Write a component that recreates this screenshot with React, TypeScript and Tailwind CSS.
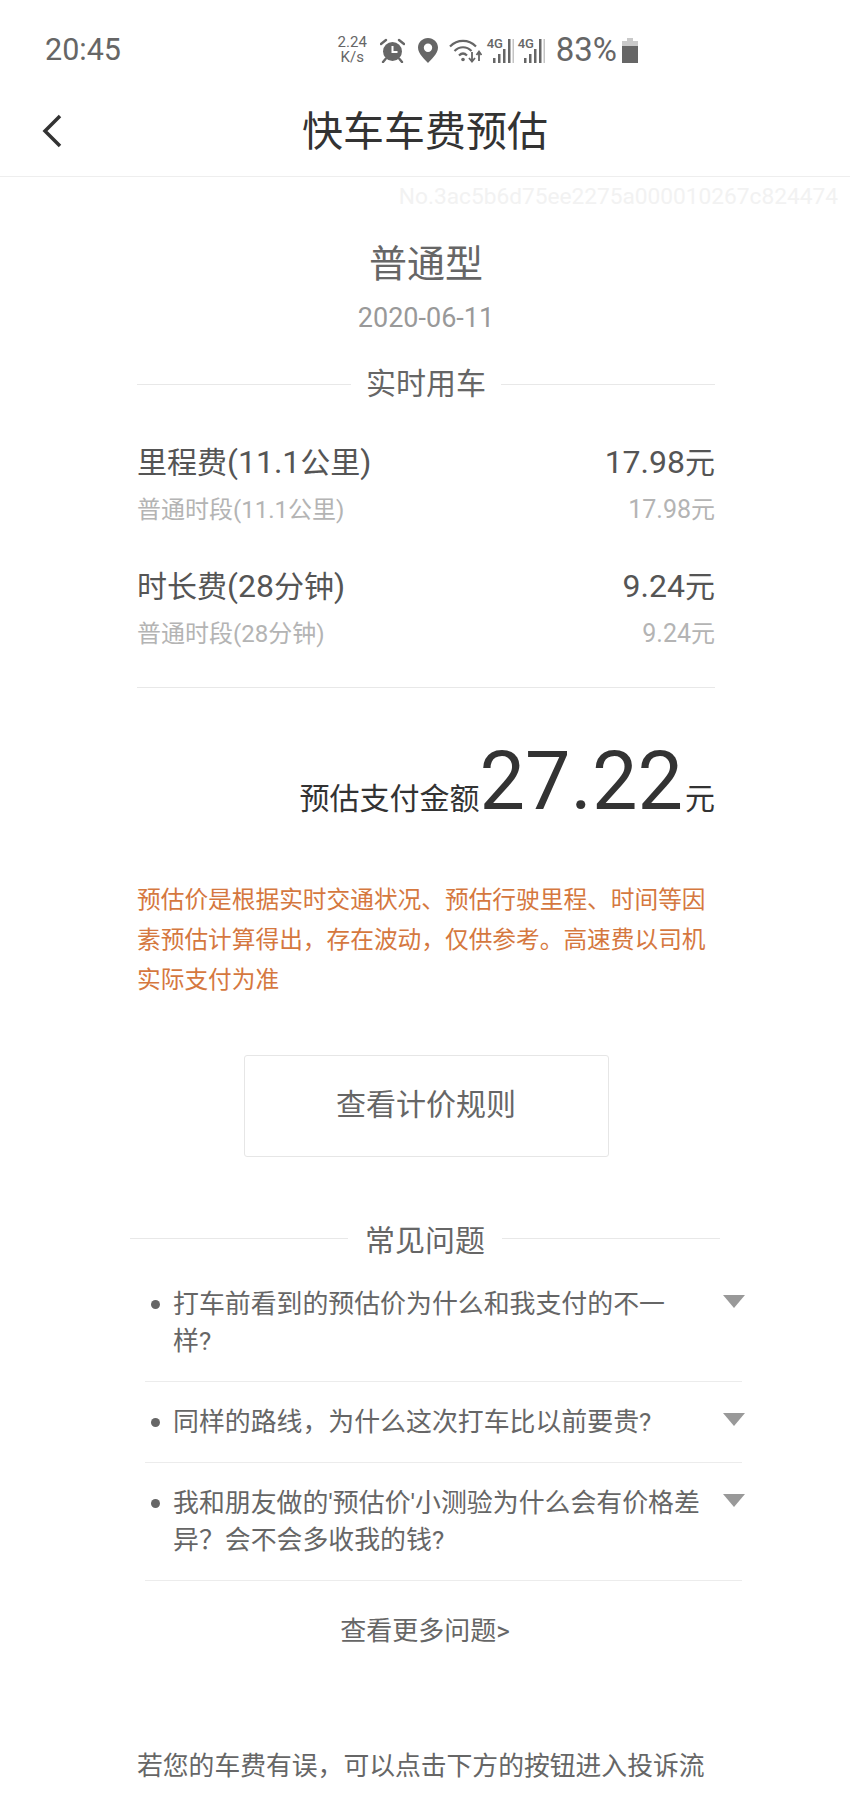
const FONT = "font-['Roboto','Noto_Sans_CJK_SC',sans-serif]";

function Alarm() {
  return (
    <svg width="25" height="25" viewBox="0 0 25 25" fill="none">
      <circle cx="12.5" cy="13.5" r="9.5" fill="#666" />
      <path d="M12.5 8v6h5" stroke="#fff" strokeWidth="2" fill="none" />
      <path d="M1 6l5-4M24 6l-5-4" stroke="#666" strokeWidth="2.4" strokeLinecap="round" />
      <path d="M5.5 21l-2.5 3M19.5 21l2.5 3" stroke="#666" strokeWidth="2.4" strokeLinecap="round" />
    </svg>
  );
}

function Pin() {
  return (
    <svg width="20" height="25" viewBox="0 0 20 25">
      <path
        fillRule="evenodd"
        d="M10 0C4.5 0 0 4.3 0 9.6 0 16 7.5 22 10 25c2.500-3 10-9 10-15.400C20 4.300 15.500 0 10 0zm0 5.500a4.200 4.200 0 110 8.400 4.200 4.200 0 010-8.400z"
        fill="#666"
      />
    </svg>
  );
}

function Wifi() {
  return (
    <svg width="33" height="25" viewBox="0 0 33 25" fill="none">
      <path d="M1 8.500C8.500 1 19.500 1 27 8.500" stroke="#666" strokeWidth="2.200" />
      <path d="M5.500 13c5-5 12-5 17 0" stroke="#666" strokeWidth="2.200" />
      <path d="M10 17.500c2.500-2.500 5.500-2.500 8 0" stroke="#666" strokeWidth="2.200" />
      <circle cx="14" cy="21.500" r="1.800" fill="#666" />
      <path d="M23 14v9M20 20l3 3.500 3-3.500" stroke="#666" strokeWidth="1.800" />
      <path d="M30 23v-9M27.500 17l2.500-3.500 2.500 3.500" stroke="#666" strokeWidth="1.800" />
    </svg>
  );
}

function Signal() {
  return (
    <div className="relative h-[25px] w-[27px]">
      <span className="absolute left-0 top-[-1px] text-[13px] leading-[14px] font-medium text-[#666]">4G</span>
      <svg className="absolute left-0 top-0" width="27" height="25" viewBox="0 0 27 25">
        <rect x="6" y="20" width="2.500" height="5" fill="#666" />
        <rect x="11" y="16" width="2.500" height="9" fill="#666" />
        <rect x="16" y="11" width="2.500" height="14" fill="#666" />
        <rect x="21" y="1" width="2.500" height="24" fill="#666" />
        <rect x="25.500" y="1" width="1.500" height="24" fill="#c4c4c4" />
      </svg>
    </div>
  );
}

function Battery() {
  return (
    <svg width="16" height="25" viewBox="0 0 16 25">
      <rect x="5" y="0" width="6" height="3" fill="#c9c9c9" />
      <rect x="0" y="3" width="16" height="5" fill="#c9c9c9" />
      <rect x="0" y="8" width="16" height="17" fill="#666" />
    </svg>
  );
}

function Caret() {
  return (
    <svg width="22" height="13" viewBox="0 0 22 13">
      <path d="M0 0h22L11 13z" fill="#999" />
    </svg>
  );
}

function Divider({ label, className, labelClass }: { label: string; className: string; labelClass?: string }) {
  return (
    <div className={"flex h-10 items-center " + className}>
      <div className="h-px flex-1 bg-[#e8e8e8]" />
      <span className={"text-[30px] leading-10 text-[#666] " + (labelClass ?? "")}>{label}</span>
      <div className="h-px flex-1 bg-[#e8e8e8]" />
    </div>
  );
}

function FeeRow({
  title,
  value,
  sub,
  className,
}: {
  title: React.ReactNode;
  value: string;
  sub: string;
  className: string;
}) {
  return (
    <div className={className}>
      <div className="flex h-10 items-center justify-between text-[30px] leading-10 text-[#555]">
        <span>{title}</span>
        <span>
          <span className="text-[32px]">{value}</span>元
        </span>
      </div>
      <div className="mt-[10px] flex h-9 items-center justify-between text-[24px] leading-9 text-[#b4b4b4]">
        <span>{sub}</span>
        <span>
          <span className="text-[25px]">{value}</span>元
        </span>
      </div>
    </div>
  );
}

function Question({ text }: { text: string }) {
  return (
    <div className="flex border-b border-[#ececec] pt-[22px] pb-[21px]">
      <div className="mt-[14px] ml-[6px] h-[9px] w-[9px] shrink-0 rounded-full bg-[#666]" />
      <p className="ml-[13px] w-[527px] shrink-0 text-[25.900px] leading-[37px] text-[#666]">{text}</p>
      <div className="mt-[9px] ml-[23px] shrink-0">
        <Caret />
      </div>
    </div>
  );
}

export default function App() {
  return (
    <div className={"h-[1794px] w-[850px] overflow-hidden bg-white " + FONT}>
      <div className="h-[88px] pt-[30px]">
        <div className="flex h-10 items-center pr-[212px] pl-[45px]">
          <span className="text-[30.500px] text-[#666]">20:45</span>
          <div className="ml-auto flex items-center text-[#666]">
            <div className="flex w-[31px] flex-col items-center text-[15px] leading-[15px]">
              <span>2.24</span>
              <span>K/s</span>
            </div>
            <div className="ml-[12px]">
              <Alarm />
            </div>
            <div className="ml-[13px]">
              <Pin />
            </div>
            <div className="ml-[11px]">
              <Wifi />
            </div>
            <div className="ml-[5px]">
              <Signal />
            </div>
            <div className="ml-[4px]">
              <Signal />
            </div>
            <span className="ml-[11px] text-[33px] leading-10">83%</span>
            <div className="ml-[5px]">
              <Battery />
            </div>
          </div>
        </div>
      </div>

      <div className="relative flex h-[89px] items-center justify-center border-b border-[#eeeeee]">
        <svg className="absolute top-[26px] left-[42px]" width="20" height="34" viewBox="0 0 20 34" fill="none">
          <path d="M18 2L3 17l15 15" stroke="#333" strokeWidth="3.500" />
        </svg>
        <h1 className="text-[41px] leading-none font-normal text-[#333]">快车车费预估</h1>
      </div>

      <div className="h-10 pr-3 text-right text-[22.700px] leading-10 text-[#f2f2f2]">
        No.3ac5b6d75ee2275a000010267c824474
      </div>

      <div className="mx-[137px] w-[578px]">
        <div className="mt-[19px] h-14 text-center text-[38px] leading-14 text-[#666]">普通型</div>
        <div className="mt-[6px] h-10 text-center text-[27px] leading-10 text-[#999]">2020-06-11</div>
        <Divider label="实时用车" className="mt-[26px] gap-[15px]" />
        <FeeRow
          className="mt-[38px]"
          title={
            <>
              里程费<span className="text-[32px]">(11.1</span>公里<span className="text-[32px]">)</span>
            </>
          }
          value="17.98"
          sub="普通时段(11.1公里)"
        />
        <FeeRow
          className="mt-[38px]"
          title={
            <>
              时长费<span className="text-[32px]">(28</span>分钟<span className="text-[32px]">)</span>
            </>
          }
          value="9.24"
          sub="普通时段(28分钟)"
        />
        <div className="mt-[35px] h-px bg-[#e8e8e8]" />

        <div className="mt-[54px] flex h-20 items-baseline justify-end leading-20 text-[#333]">
          <span className="text-[30px]">预估支付金额</span>
          <span className="text-[81px]">27.22</span>
          <span className="ml-[2px] text-[30px]">元</span>
        </div>

        <p className="mt-[58px] w-[570px] text-[23.700px] leading-10 text-[#d5783f]">
          预估价是根据实时交通状况、预估行驶里程、时间等因素预估计算得出，存在波动，仅供参考。高速费以司机实际支付为准
        </p>

        <div className="mt-[55px] flex justify-center">
          <button className="h-[102px] w-[365px] rounded-[3px] border border-[#e6e6e6] pb-1 text-[30px] text-[#666]">
            查看计价规则
          </button>
        </div>
      </div>

      <Divider label="常见问题" labelClass="pt-[5px]" className="mx-[130px] mt-[61px] gap-[17px]" />

      <div className="mt-[6px] ml-[145px] w-[597px]">
        <Question text="打车前看到的预估价为什么和我支付的不一样?" />
        <Question text="同样的路线，为什么这次打车比以前要贵?" />
        <Question text="我和朋友做的'预估价'小测验为什么会有价格差异？会不会多收我的钱?" />
      </div>

      <div className="mt-[30px] h-10 text-center text-[26px] leading-10 text-[#666]">查看更多问题&gt;</div>

      <p className="mt-[95px] ml-[137px] w-[578px] text-[25.800px] leading-10 text-[#666]">
        若您的车费有误，可以点击下方的按钮进入投诉流
      </p>
    </div>
  );
}
